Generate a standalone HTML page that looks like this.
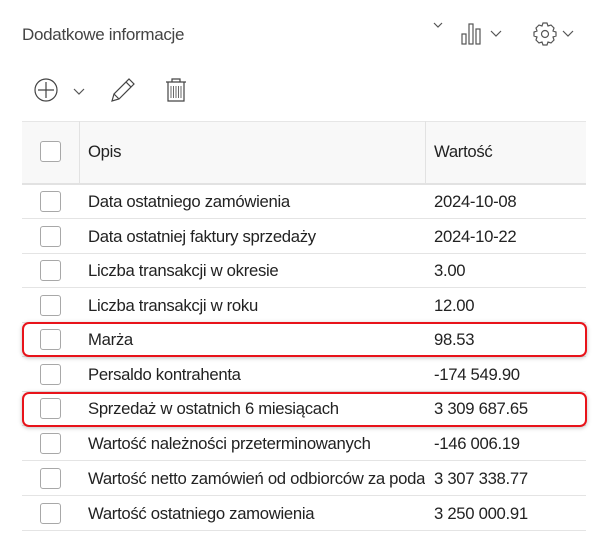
<!DOCTYPE html>
<html><head><meta charset="utf-8"><style>
body{margin:0;width:608px;height:553px;background:#fff;font-family:"Liberation Sans",sans-serif;position:relative;overflow:hidden;color:#222}
.abs{position:absolute}
.title{left:22px;top:25px;font-size:17px;color:#444;letter-spacing:-0.3px}
.hdr{left:22px;top:121px;width:564px;height:61px;background:#f8f8f8;border-top:1px solid #e6e6e6;border-bottom:2px solid #e2e2e2}
.vd{top:121px;width:1px;height:62px;background:#e2e2e2}
.cb{width:19px;height:19px;border:1px solid #a8a8a8;border-radius:3px;background:#fff;left:40px}
.t{font-size:16.7px;letter-spacing:-0.3px;white-space:nowrap}
.line{left:22px;width:564px;height:1px;background:#e4e4e4}
.red{left:22px;width:561px;border:2px solid #e8131a;border-radius:7px;box-shadow:0 1px 4px rgba(0,0,0,.25)}
</style></head><body>
<div class="abs title">Dodatkowe informacje</div>
<svg class="abs" style="left:0;top:0" width="608" height="120" fill="none" stroke="#555" stroke-width="1.2">
<path d="M434 23l4 4 4-4"/>
<rect x="462" y="34" width="4" height="10"/><rect x="469" y="24" width="4" height="20"/><rect x="476" y="29" width="4" height="15"/>
<path d="M491 31l5 5 5-5"/>
<path d="M563 31l5 5 5-5"/>
<circle cx="545" cy="34" r="3.5"/>
<path d="M543 23h4l1 3 3-1 3 3-1 3 3 1v4l-3 1 1 3-3 3-3-1-1 3h-4l-1-3-3 1-3-3 1-3-3-1v-4l3-1-1-3 3-3 3 1z"/>
<circle cx="46" cy="90" r="11" stroke="#444"/><path d="M46 82v16M38 90h16" stroke="#444"/>
<path d="M74 89l5 5 5-5"/>
<path d="M112 101l2-7 15-15 5 5-15 15z M114 94l5 5 M126 82l5 5" stroke="#444"/>
<path d="M166 82h20M172 82v-3h8v3M168 82v19h16v-19" stroke="#444"/>
<path d="M171 86v12M173.5 86v12M176 86v12M178.5 86v12M181 86v12" stroke="#444" stroke-width="0.8"/>
</svg>
<div class="abs hdr"></div>
<div class="abs vd" style="left:79px"></div>
<div class="abs vd" style="left:425px"></div>
<div class="abs cb" style="top:141px"></div>
<div class="abs t" style="left:88px;top:142px">Opis</div>
<div class="abs t" style="left:434px;top:142px">Wartość</div>

<div class="abs cb" style="top:191px"></div><div class="abs t" style="left:88px;top:192px">Data ostatniego zamówienia</div><div class="abs t" style="left:434px;top:192px">2024-10-08</div><div class="abs line" style="top:218px"></div>
<div class="abs cb" style="top:226px"></div><div class="abs t" style="left:88px;top:227px">Data ostatniej faktury sprzedaży</div><div class="abs t" style="left:434px;top:227px">2024-10-22</div><div class="abs line" style="top:253px"></div>
<div class="abs cb" style="top:260px"></div><div class="abs t" style="left:88px;top:261px">Liczba transakcji w okresie</div><div class="abs t" style="left:434px;top:261px">3.00</div><div class="abs line" style="top:287px"></div>
<div class="abs cb" style="top:295px"></div><div class="abs t" style="left:88px;top:296px">Liczba transakcji w roku</div><div class="abs t" style="left:434px;top:296px">12.00</div><div class="abs line" style="top:322px"></div>
<div class="abs cb" style="top:329px"></div><div class="abs t" style="left:88px;top:330px">Marża</div><div class="abs t" style="left:434px;top:330px">98.53</div><div class="abs line" style="top:356px"></div>
<div class="abs cb" style="top:364px"></div><div class="abs t" style="left:88px;top:365px">Persaldo kontrahenta</div><div class="abs t" style="left:434px;top:365px">-174 549.90</div><div class="abs line" style="top:391px"></div>
<div class="abs cb" style="top:398px"></div><div class="abs t" style="left:88px;top:399px">Sprzedaż w ostatnich 6 miesiącach</div><div class="abs t" style="left:434px;top:399px">3 309 687.65</div><div class="abs line" style="top:425px"></div>
<div class="abs cb" style="top:433px"></div><div class="abs t" style="left:88px;top:434px">Wartość należności przeterminowanych</div><div class="abs t" style="left:434px;top:434px">-146 006.19</div><div class="abs line" style="top:460px"></div>
<div class="abs cb" style="top:468px"></div><div class="abs t" style="left:88px;top:469px;width:337px;overflow:hidden">Wartość netto zamówień od odbiorców za poda</div><div class="abs t" style="left:434px;top:469px">3 307 338.77</div><div class="abs line" style="top:495px"></div>
<div class="abs cb" style="top:503px"></div><div class="abs t" style="left:88px;top:504px">Wartość ostatniego zamowienia</div><div class="abs t" style="left:434px;top:504px">3 250 000.91</div><div class="abs line" style="top:530px"></div>

<div class="abs red" style="top:322px;height:31px"></div>
<div class="abs red" style="top:392px;height:31px"></div>
</body></html>
